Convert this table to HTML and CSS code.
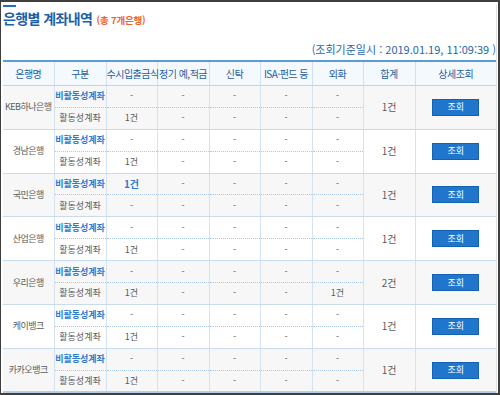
FILE: index.html
```html
<!DOCTYPE html>
<html lang="ko">
<head>
<meta charset="utf-8">
<link rel="stylesheet" href="styles.css">
</head>
<body>
<div class="frame">
  <div class="inner">
    <div class="title-bar"></div>
    <h1 class="title">은행별 계좌내역 <span class="count">(총 7개은행)</span></h1>
    <div class="date">(조회기준일시 : 2019.01.19, 11:09:39 )</div>
    <table class="grid">
      <colgroup>
        <col class="c51"><col class="c52"><col class="c51"><col class="c52"><col class="c51"><col class="c52"><col class="c51"><col class="c52"><col class="c81">
      </colgroup>
      <thead>
        <tr><th>은행명</th><th>구분</th><th>수시입출금식</th><th>정기 예,적금</th><th>신탁</th><th>ISA·펀드 등</th><th>외화</th><th>합계</th><th>상세조회</th></tr>
      </thead>
      <tbody>
        <tr class="odd top"><td rowspan="2" class="bank">KEB하나은행</td><td class="kind">비활동성계좌</td><td>-</td><td>-</td><td>-</td><td>-</td><td>-</td><td rowspan="2" class="sum">1건</td><td rowspan="2"><button class="btn">조회</button></td></tr>
        <tr class="odd"><td>활동성계좌</td><td>1건</td><td>-</td><td>-</td><td>-</td><td>-</td></tr>

        <tr class="even top"><td rowspan="2" class="bank">경남은행</td><td class="kind">비활동성계좌</td><td>-</td><td>-</td><td>-</td><td>-</td><td>-</td><td rowspan="2" class="sum">1건</td><td rowspan="2"><button class="btn">조회</button></td></tr>
        <tr class="even"><td>활동성계좌</td><td>1건</td><td>-</td><td>-</td><td>-</td><td>-</td></tr>

        <tr class="odd top"><td rowspan="2" class="bank">국민은행</td><td class="kind">비활동성계좌</td><td class="hl">1건</td><td>-</td><td>-</td><td>-</td><td>-</td><td rowspan="2" class="sum">1건</td><td rowspan="2"><button class="btn">조회</button></td></tr>
        <tr class="odd"><td>활동성계좌</td><td>-</td><td>-</td><td>-</td><td>-</td><td>-</td></tr>

        <tr class="even top"><td rowspan="2" class="bank">산업은행</td><td class="kind">비활동성계좌</td><td>-</td><td>-</td><td>-</td><td>-</td><td>-</td><td rowspan="2" class="sum">1건</td><td rowspan="2"><button class="btn">조회</button></td></tr>
        <tr class="even"><td>활동성계좌</td><td>1건</td><td>-</td><td>-</td><td>-</td><td>-</td></tr>

        <tr class="odd top"><td rowspan="2" class="bank">우리은행</td><td class="kind">비활동성계좌</td><td>-</td><td>-</td><td>-</td><td>-</td><td>-</td><td rowspan="2" class="sum">2건</td><td rowspan="2"><button class="btn">조회</button></td></tr>
        <tr class="odd"><td>활동성계좌</td><td>1건</td><td>-</td><td>-</td><td>-</td><td>1건</td></tr>

        <tr class="even top"><td rowspan="2" class="bank">케이뱅크</td><td class="kind">비활동성계좌</td><td>-</td><td>-</td><td>-</td><td>-</td><td>-</td><td rowspan="2" class="sum">1건</td><td rowspan="2"><button class="btn">조회</button></td></tr>
        <tr class="even"><td>활동성계좌</td><td>1건</td><td>-</td><td>-</td><td>-</td><td>-</td></tr>

        <tr class="odd top"><td rowspan="2" class="bank">카카오뱅크</td><td class="kind">비활동성계좌</td><td>-</td><td>-</td><td>-</td><td>-</td><td>-</td><td rowspan="2" class="sum">1건</td><td rowspan="2"><button class="btn">조회</button></td></tr>
        <tr class="odd last"><td>활동성계좌</td><td>1건</td><td>-</td><td>-</td><td>-</td><td>-</td></tr>
      </tbody>
    </table>
  </div>
</div>
</body>
</html>
```

FILE: styles.css
```css
html, body {
  margin: 0;
  padding: 0;
  background: #ffffff;
}
body {
  font-family: "Noto Sans CJK KR", "Noto Sans", sans-serif;
  color: #555555;
}
.frame {
  width: 500px;
  height: 395px;
  box-sizing: border-box;
  border-top: 2px solid #3f3f3f;
  border-left: 1px solid #3f3f3f;
  border-right: 2px solid #3f3f3f;
  border-bottom: 2px solid #3f3f3f;
  overflow: hidden;
}
.inner {
  height: 100%;
  box-sizing: border-box;
  padding-left: 2px;
  border-right: 1px solid #e2e2e2;
  width: 496px;
}
.title-bar {
  width: 13px;
  height: 2px;
  background: #1f6fc0;
  margin-top: 3px;
}
.title {
  margin: 1px 0 0 0;
  font-size: 14px;
  line-height: 20px;
  font-weight: bold;
  color: #1c5fa8;
  letter-spacing: -0.6px;
}
.count {
  font-size: 9.5px;
  color: #f0642a;
  font-weight: bold;
  letter-spacing: -0.2px;
  margin-left: 1px;
}
.date {
  text-align: right;
  font-size: 11px;
  line-height: 16px;
  color: #2766a8;
  margin-top: 11px;
  letter-spacing: 0;
}
.c51 { width: 51px; }
.c52 { width: 52px; }
.c81 { width: 81px; }
.grid {
  margin-top: 3px;
  width: 493px;
  border-collapse: collapse;
  table-layout: fixed;
  border-top: 2px solid #5d9bd6;
  border-bottom: 2px solid #b3d0ea;
}
.grid th {
  height: 23px;
  padding: 0;
  font-size: 10px;
  font-weight: normal;
  color: #1d5f9f;
  background: #f4f9fd;
  border-left: 1px solid #cfe1f2;
  border-bottom: 1px solid #bcd6ec;
  white-space: nowrap;
  text-align: center;
  letter-spacing: -0.5px;
}
.grid th:first-child { border-left: none; }
.grid td {
  height: 20.9px;
  padding: 0;
  font-size: 9px;
  line-height: 12px;
  text-align: center;
  color: #5a5a5a;
  border-left: 1px solid #d3e3f2;
  border-bottom: 1px dotted #a9c8e6;
  white-space: nowrap;
}
.grid td.bank {
  border-left: none;
  letter-spacing: -0.5px;
  overflow: visible;
}
.grid td.sum { font-size: 10px; }
.grid tr.top td { border-top: 1px solid #c9dcee; }
.grid td[rowspan] { border-bottom: 1px solid #c9dcee; }
.grid tr.odd + tr.odd td,
.grid tr.even + tr.even td { border-bottom: 1px solid #c9dcee; }
.grid tr.last td { border-bottom: none; }
.grid tr.odd td { background: #f7f7f7; }
.grid tr.even td { background: #ffffff; }
.kind, .hl {
  color: #2a7bd2 !important;
  font-weight: bold;
}
.hl { font-size: 10px !important; }
.btn {
  display: inline-block;
  width: 47px;
  height: 17px;
  padding: 0;
  border: 1px solid #1560b0;
  background: #1f76cc;
  color: #ffffff;
  font-family: "Noto Sans CJK KR", sans-serif;
  font-size: 9px;
  line-height: 14px;
  cursor: pointer;
  vertical-align: middle;
}
```
